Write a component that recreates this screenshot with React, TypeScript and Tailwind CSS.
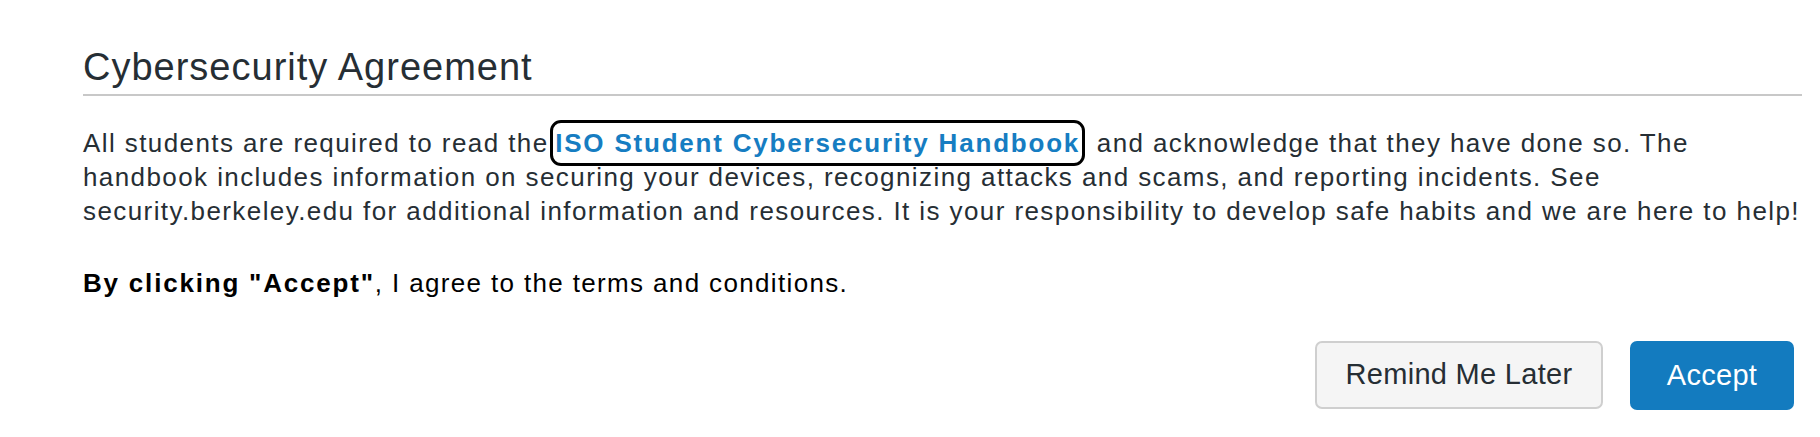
import React from "react";

const font = { fontFamily: '"Liberation Sans", Arial, sans-serif' };

export default function App() {
  return (
    <div className="w-[1820px] h-[437px] bg-white text-[#262e34] pl-[83px] pr-[18px]" style={font}>
      {/* Heading */}
      <h2 className="pt-[44px] pb-[4px] text-[38px] leading-[46px] tracking-[1px] font-normal border-b-2 border-[#c8c8c8]">
        Cybersecurity Agreement
      </h2>

      {/* Body */}
      <p className="mt-[30px] text-[26px] leading-[34.2px] tracking-[1.41px] whitespace-nowrap">
        All students are required to read the{" "}
        <a
          href="#"
          className="-ml-[2px] font-bold tracking-[1.8px] text-[#167dc2] py-[3px] rounded-[6px] outline-[3px] outline-offset-[2px] outline-solid outline-black"
        >
          ISO Student Cybersecurity Handbook
        </a>
        <span className="inline-block w-[8px]" /> and acknowledge that they have done so. The
        <br />
        handbook includes information on securing your devices, recognizing attacks and scams, and reporting incidents.
        See
        <br />
        security.berkeley.edu for additional information and resources. It is your responsibility to develop safe
        habits and we are here to help!
      </p>
      <p className="mt-[37px] text-[26px] leading-[34.2px] tracking-[1.35px] text-black">
        <b className="tracking-[1.8px]">By clicking "Accept"</b>, I agree to the terms and conditions.
      </p>

      {/* Actions */}
      <div className="mt-[41px] pr-[8px] flex justify-end gap-[27px]">
        <button className="w-[288px] h-[68px] bg-[#f5f5f5] border-2 border-[#cfcfcf] rounded-[7px] text-[29px] tracking-[0.3px] text-[#262e34]">
          Remind Me Later
        </button>
        <button className="w-[164px] h-[69px] bg-[#137bbf] rounded-[7px] text-[29px] tracking-[0.3px] text-white">
          Accept
        </button>
      </div>
    </div>
  );
}
